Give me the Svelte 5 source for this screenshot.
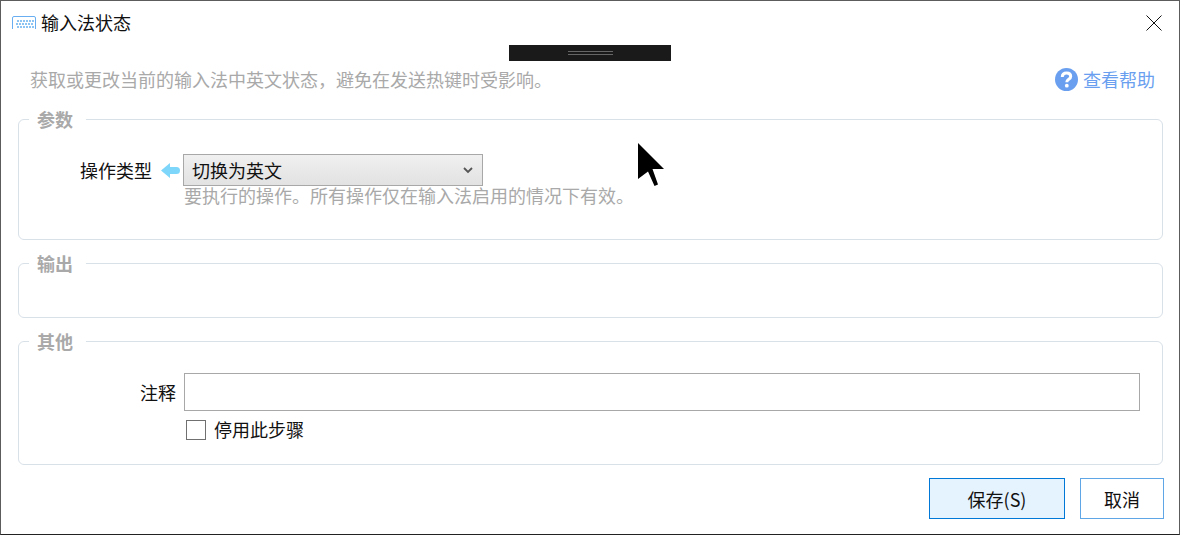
<script>
  let kind = $state('切换为英文');
  let note = $state('');
  let disabled = $state(false);
  const keyRows = [
    { y: 4, xs: [5, 8, 11, 14, 17, 20] },
    { y: 7, xs: [4, 7, 10, 13, 16, 19] },
    { y: 10, xs: [5, 8, 11, 14, 17, 20] }
  ];
</script>

<div class="win">
  <header class="title">
    <svg class="kb" width="24" height="14" viewBox="0 0 24 14" aria-hidden="true">
      <path d="M.5 13V2A1.500 1.500 0 0 1 2 .500h20A1.500 1.500 0 0 1 23.500 2v11" fill="none" stroke="#68aef0" />
      {#each keyRows as row}
        {#each row.xs as x}
          <rect {x} y={row.y} width="2" height="2" fill="#8cc4f4" />
        {/each}
      {/each}
    </svg>
    <span class="title-text">输入法状态</span>
    <svg class="close" width="16" height="16" viewBox="0 0 16 16" aria-hidden="true">
      <path d="M.5.500l15 15M15.500.500l-15 15" stroke="#111" fill="none" />
    </svg>
  </header>

  <div class="intro">
    <span class="desc">获取或更改当前的输入法中英文状态，避免在发送热键时受影响。</span>
    <a class="help" href="#help">
      <svg width="23" height="23" viewBox="0 0 23 23" aria-hidden="true">
        <circle cx="11.500" cy="11.500" r="11.500" fill="#6a9ff0" />
        <path d="M7.300 9c0-2.500 1.800-4 4.300-4s4.100 1.400 4.100 3.500c0 3-3.900 2.700-3.900 5.700" fill="none" stroke="#fff" stroke-width="3" />
        <circle cx="11.800" cy="17.700" r="1.900" fill="#fff" />
      </svg>
      <span>查看帮助</span>
    </a>
  </div>

  <fieldset class="group first">
    <legend>参数</legend>
    <div class="row">
      <span class="label">操作类型</span>
      <svg class="arrow" width="19" height="15" viewBox="0 0 19 15" aria-hidden="true">
        <path d="M0 7.500L9 0v4h6.500a3.500 3.500 0 0 1 0 7H9v4z" fill="#7fd6fb" />
      </svg>
      <div class="select">
        <span>{kind}</span>
        <svg width="10" height="7" viewBox="0 0 10 7" aria-hidden="true">
          <path d="M1 1l4 4 4-4" fill="none" stroke="#555" stroke-width="1.800" />
        </svg>
      </div>
    </div>
    <p class="hint">要执行的操作。所有操作仅在输入法启用的情况下有效。</p>
  </fieldset>

  <fieldset class="group second">
    <legend>输出</legend>
  </fieldset>

  <fieldset class="group third">
    <legend>其他</legend>
    <div class="row note-row">
      <span class="label short">注释</span>
      <input class="note" bind:value={note} aria-label="注释" />
    </div>
    <label class="check">
      <input type="checkbox" bind:checked={disabled} />
      <span>停用此步骤</span>
    </label>
  </fieldset>

  <footer class="actions">
    <button class="primary">保存(S)</button>
    <button class="cancel">取消</button>
  </footer>

  <div class="grip"><i></i></div>
  <svg class="cursor" width="29" height="44" viewBox="0 0 29 44" aria-hidden="true">
    <path d="M0 0L26 26H14.500L20 41.500 16.500 43 10 28.500 0 36z" fill="#000" />
  </svg>
</div>

<style>
  :global(body) {
    margin: 0;
    background: #fff;
  }
  .win {
    position: relative;
    box-sizing: border-box;
    width: 1180px;
    height: 535px;
    border: 1px solid #5c5c5c;
    border-bottom-color: #222;
    background: #fff;
    overflow: hidden;
    font-family: "Noto Sans CJK SC", "Noto Sans", sans-serif;
    font-size: 18px;
    color: #111;
  }
  .title {
    display: flex;
    align-items: center;
    height: 44px;
    padding: 0 17px 0 11px;
  }
  .kb { margin-right: 5px; }
  .title-text {
    flex: 1;
    margin-bottom: 3px;
  }
  .close { margin-bottom: 1px; }
  .intro {
    display: flex;
    align-items: center;
    justify-content: space-between;
    height: 24px;
    margin-top: 22px;
    padding: 0 24px 0 29px;
  }
  .desc { margin-bottom: 1px; color: #a9a9a9; }
  .help {
    display: flex;
    align-items: center;
    gap: 5px;
    color: #6a9ff0;
    text-decoration: none;
  }
  .group {
    box-sizing: border-box;
    width: 1145px;
    margin: 0 0 0 17px;
    padding: 0;
    border: 1px solid #d8e0e8;
    border-radius: 6px;
    min-width: 0;
  }
  .group legend {
    margin-left: 10px;
    padding: 0 13px 0 8px;
    font-weight: 700;
    color: #a9a9a9;
    line-height: 22px;
  }
  .first { height: 132px; margin-top: 17px; }
  .second { height: 66px; margin-top: 12px; }
  .third { height: 135px; margin-top: 12px; }
  .row {
    display: flex;
    align-items: center;
  }
  .first .row { margin-top: 24px; }
  .label {
    width: 133px;
    text-align: right;
  }
  .short { width: 157px; }
  .arrow { margin: 0 3px 0 9px; }
  .select {
    box-sizing: border-box;
    display: flex;
    align-items: center;
    justify-content: space-between;
    width: 300px;
    height: 32px;
    padding: 0 9px 0 8px;
    border: 1px solid #a8a8a8;
    background: linear-gradient(#f0f0f0, #e2e2e2);
  }
  .hint {
    margin: -3px 0 0 165px;
    line-height: 24px;
    color: #a9a9a9;
  }
  .note-row { margin-top: 21px; }
  .note {
    box-sizing: border-box;
    width: 956px;
    height: 38px;
    margin-left: 8px;
    border: 1px solid #a8a8a8;
    outline: none;
    font: inherit;
  }
  .check {
    display: flex;
    align-items: center;
    gap: 8px;
    margin: 6px 0 0 167px;
    line-height: 24px;
  }
  .check span { margin-bottom: 2px; }
  .check input {
    appearance: none;
    box-sizing: border-box;
    width: 20px;
    height: 20px;
    margin: 0;
    border: 1px solid #707070;
    background: #fff;
  }
  .actions {
    display: flex;
    justify-content: flex-end;
    gap: 15px;
    margin-top: 13px;
    padding-right: 15px;
  }
  button {
    box-sizing: border-box;
    height: 41px;
    font: inherit;
    color: #111;
    background: #fff;
    padding: 0;
  }
  .primary {
    width: 136px;
    border: 1px solid #0078d7;
    background: #e5f3ff;
  }
  .cancel {
    width: 84px;
    border: 1px solid #5ea6e6;
  }
  .grip {
    position: absolute;
    left: 508px;
    top: 44px;
    display: flex;
    align-items: center;
    justify-content: center;
    width: 162px;
    height: 16px;
    background: #1a1a1a;
  }
  .grip i {
    display: block;
    width: 45px;
    height: 2px;
    border-top: 1px solid #666;
    border-bottom: 1px solid #666;
    background: #1a1a1a;
  }
  .cursor {
    position: absolute;
    left: 637px;
    top: 142px;
  }
</style>
